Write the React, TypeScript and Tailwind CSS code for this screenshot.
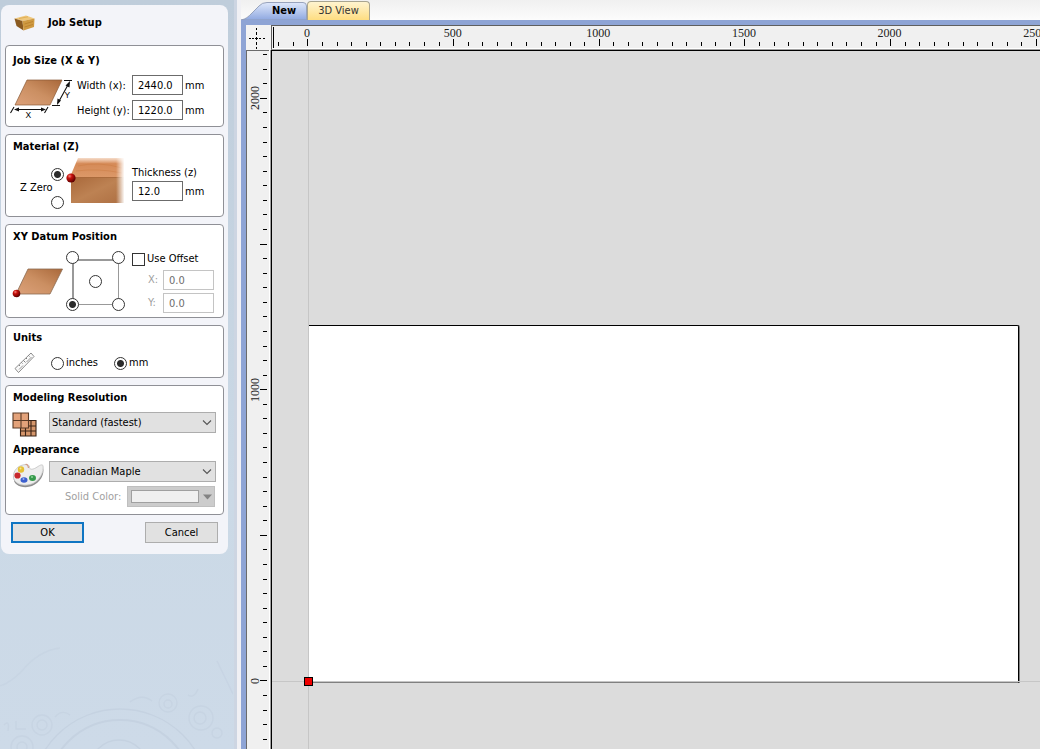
import React, { useId, useState } from "react";

const PX_PER_MM = 0.2913;

const radioClass =
  "m-0 block size-[13px] shrink-0 appearance-none rounded-full border border-[#333] bg-white checked:bg-[radial-gradient(circle,#2b2b2b_0,#2b2b2b_3px,#fff_4px)]";
const inputClass =
  "block h-5 w-[51px] border border-[#6b6b6b] bg-white px-[5px] text-black outline-none";
const disabledInputClass =
  "block h-5 w-[51px] border border-[#c4c4c4] bg-white px-[5px] text-[#6d6d6d] outline-none";

function Group({ title, roomy, children }: { title: string; roomy?: boolean; children: React.ReactNode }) {
  return (
    <section className={`rounded-[4px] border border-[#8f9096] bg-white px-1 ${roomy ? "pt-[7px]" : "pt-1"}`}>
      <h2 className="pl-[3px] font-bold leading-4">{title}</h2>
      {children}
    </section>
  );
}

function WoodBlockIcon() {
  return (
    <svg width="22" height="18" viewBox="0 0 22 18" aria-hidden="true">
      <path d="M0.5 4.5 L12 1.500 L20.500 4.500 L8.500 7 Z" fill="#efc77c" />
      <path d="M0.500 4.500 L8.500 7 L9.500 16.500 L2.500 12 Z" fill="#8a5a20" />
      <path d="M8.500 7 L20.500 4.500 L20 13 L9.500 16.500 Z" fill="#cf9a42" />
      <path d="M10.500 10 L19 7.500 M10.500 13 L19 10.500" stroke="#b87d2a" strokeWidth="0.8" />
      <path d="M5 4.500 L14 2.800" stroke="#dba951" strokeWidth="0.8" />
    </svg>
  );
}

function JobSizeDrawing() {
  return (
    <svg className="shrink-0" width="67" height="44" viewBox="0 0 67 44" aria-hidden="true">
      <defs>
        <linearGradient id="sheetWood" x1="0" y1="1" x2="1" y2="0">
          <stop offset="0" stopColor="#dca17a" />
          <stop offset="0.5" stopColor="#cb8f62" />
          <stop offset="1" stopColor="#a9683a" />
        </linearGradient>
      </defs>
      <path d="M17 5 H52 L40 30 H5 Z" fill="url(#sheetWood)" stroke="#8a5a36" strokeWidth="0.7" />
      <g stroke="#111" strokeWidth="1.100" fill="none">
        <path d="M54 5.500 H62 M42 30.500 H50 M59 8 L48 28" />
        <path d="M4 32 L0.500 38 M38 32 L34.500 38 M5 34.500 H34" />
      </g>
      <path d="M60 6 L55.500 10.500 L59.500 12.500 Z M47 30 L47.500 23.500 L51 25.500 Z" fill="#111" />
      <path d="M4 34.500 L9 32.500 V36.500 Z M36 34.500 L31 32.500 V36.500 Z" fill="#111" />
      <text x="15.500" y="43" fontSize="8.500" fontFamily="Liberation Sans, sans-serif">X</text>
      <text x="54.500" y="23" fontSize="8.500" fontFamily="Liberation Sans, sans-serif">Y</text>
    </svg>
  );
}

function MaterialDrawing() {
  return (
    <svg className="shrink-0" width="66" height="50" viewBox="0 0 66 50" aria-hidden="true">
      <defs>
        <linearGradient id="matTop" x1="0" y1="0" x2="0" y2="1">
          <stop offset="0" stopColor="#e6a678" stopOpacity="0.400" />
          <stop offset="0.300" stopColor="#d58a57" />
          <stop offset="1" stopColor="#dc9868" />
        </linearGradient>
        <linearGradient id="matFront" x1="0" y1="0" x2="1" y2="1">
          <stop offset="0" stopColor="#a9683a" />
          <stop offset="0.500" stopColor="#bd8253" />
          <stop offset="1" stopColor="#ad6f42" />
        </linearGradient>
        <linearGradient id="matFade" x1="0" y1="0" x2="1" y2="0">
          <stop offset="0" stopColor="#fff" stopOpacity="0" />
          <stop offset="1" stopColor="#fff" />
        </linearGradient>
        <radialGradient id="ball" cx="0.350" cy="0.300" r="0.700">
          <stop offset="0" stopColor="#f2877f" />
          <stop offset="0.350" stopColor="#c8100c" />
          <stop offset="1" stopColor="#5c0000" />
        </radialGradient>
      </defs>
      <path d="M14 2 H60 V21 H6 Z" fill="url(#matTop)" />
      <path d="M14 10 Q34 5 58 12 M12 15 Q34 12 58 17" stroke="#c9783f" strokeWidth="1" fill="none" opacity="0.400" />
      <path d="M7 21 H60 V47 H7 Z" fill="url(#matFront)" />
      <path d="M6 21.500 H58" stroke="#a8683a" strokeWidth="0.800" />
      <rect x="52" y="0" width="8.500" height="50" fill="url(#matFade)" />
      <circle cx="7" cy="22" r="4.600" fill="url(#ball)" />
    </svg>
  );
}

function DatumDrawing() {
  return (
    <svg className="shrink-0" width="56" height="32" viewBox="0 0 56 32" aria-hidden="true">
      <path d="M18 2 H52.500 L40 27 H6 Z" fill="url(#sheetWood)" stroke="#8a6a50" strokeWidth="0.800" />
      <circle cx="6.500" cy="26.500" r="3.800" fill="url(#ball)" />
    </svg>
  );
}

function MeasureIcon() {
  return (
    <svg width="22" height="22" viewBox="0 0 22 22" fill="none" stroke="#6e6e6e" aria-hidden="true">
      <path d="M1 16.500 L17 1 L20 4.500 L4.500 20.500 Z" fill="#fafafa" strokeWidth="0.800" />
      <path d="M5 13 L6 14 M7.500 10.500 L8.500 11.500 M9.500 8.500 L11.500 10.500 M12 6 L13 7 M14.500 3.500 L15.500 4.500" strokeWidth="0.900" />
      <path d="M5 17.500 L9 13.500 M12.500 10 L17.500 5" strokeWidth="0.700" />
    </svg>
  );
}

function ResolutionIcon() {
  return (
    <svg width="26" height="26" viewBox="0 0 26 26" aria-hidden="true">
      <path d="M8.500 8.500 H24 V24 H8.500 Z" fill="#d5966b" stroke="#3a2417" strokeWidth="1.100" />
      <path d="M13.500 8 V24 M19 8 V24 M8 14 H24 M8 19 H24" stroke="#3a2417" strokeWidth="1.100" />
      <path d="M1 1 H16.500 V16 H1 Z" fill="#e3a27a" stroke="#5a3a26" strokeWidth="1.100" />
      <path d="M9 1 V16 M1 8.500 H16.500" stroke="#5a3a26" strokeWidth="1.100" />
    </svg>
  );
}

function PaletteIcon() {
  return (
    <svg width="33" height="28" viewBox="0 0 33 28" aria-hidden="true">
      <path d="M2 14 C0 23 12 26 20 23 C28 20 33 11 31 5 L31 8 C29 15 22 21 13 21 Z" fill="#8d8d8d" />
      <path d="M14.500 1.500 C6 1.500 0.500 8 1.500 15 C3 22 13 24 21 20.500 C28 17 32 9 31 2.500 C29 0.500 26 4 22.500 5.500 C19 7 17.500 6 17.500 4 C17.500 2.500 16 1.500 14.500 1.500 Z" fill="#ededed" stroke="#c0c0c0" strokeWidth="0.800" />
      <path d="M13.500 1.500 Q16 1 16.500 5" stroke="#d39b86" strokeWidth="1.200" fill="none" />
      <circle cx="9" cy="6.500" r="3.200" fill="#e5c033" />
      <circle cx="5.500" cy="12.500" r="3.100" fill="#c8292d" />
      <ellipse cx="12" cy="17" rx="3.500" ry="2.800" fill="#3c5fce" />
      <ellipse cx="20.500" cy="15" rx="3.500" ry="2.900" fill="#369a4b" />
      <circle cx="8.500" cy="5.500" r="1" fill="#f8e694" />
      <circle cx="20" cy="14" r="1" fill="#8fd49a" />
      <circle cx="11.500" cy="16" r="1" fill="#9ab0f0" />
    </svg>
  );
}

function Watermark() {
  return (
    <svg className="mt-auto block" width="233" height="110" viewBox="0 0 233 110" fill="none" stroke="#c5d2e1" strokeWidth="1.300" aria-hidden="true">
      <path d="M0 47 Q10 44 22 32 Q38 12 60 9" opacity="0.600" />
      <path d="M217 22 L233 55" opacity="0.700" />
      <circle cx="120" cy="159" r="89" />
      <circle cx="120" cy="154" r="73" strokeWidth="2" />
      <circle cx="119" cy="130" r="29" />
      <g opacity="0.700">
        <circle cx="42" cy="86" r="10" />
        <circle cx="42" cy="86" r="5" />
        <circle cx="22" cy="108" r="11" />
        <circle cx="22" cy="108" r="5" />
        <circle cx="168" cy="64" r="9" />
        <circle cx="168" cy="65" r="4" />
        <circle cx="201" cy="79" r="12" />
        <circle cx="200" cy="79" r="6" />
        <circle cx="217" cy="94" r="5" />
        <path d="M4 86 Q10 80 8 92 M16 82 V90 H26 M55 78 Q62 70 70 76 M130 63 Q142 54 152 62 M188 56 Q194 60 198 50" />
      </g>
    </svg>
  );
}

function Combo({ label, value, options, indent }: { label: string; value: string; options: string[]; indent?: boolean }) {
  const [current, setCurrent] = useState(value);
  return (
    <div className="relative w-[167px]">
      <select
        aria-label={label}
        value={current}
        onChange={(e) => setCurrent(e.target.value)}
        className={`block h-[21px] w-full appearance-none border border-[#adadad] bg-[#e1e1e1] pr-5 text-black outline-none ${indent ? "pl-[11px]" : "pl-0.5"}`}
      >
        {options.map((o) => (
          <option key={o}>{o}</option>
        ))}
      </select>
      <svg className="pointer-events-none absolute right-1 top-[7px]" width="10" height="8" viewBox="0 0 10 8" fill="none" stroke="#555" aria-hidden="true">
        <path d="M1 1.500 L5 5.500 L9 1.500" strokeWidth="1.100" />
      </svg>
    </div>
  );
}

function SizeRow({ label, value }: { label: string; value: string }) {
  const id = useId();
  return (
    <div className="flex h-5 items-center">
      <label htmlFor={id} className="w-[55px] pt-0.5">{label}</label>
      <input id={id} className={inputClass} defaultValue={value} />
      <span className="pl-0.5 pt-0.5">mm</span>
    </div>
  );
}

function JobSetupPanel() {
  return (
    <form className="ml-px mt-[5px] w-[227px] rounded-lg bg-[#f3f4f9] px-1 pb-[11px]" onSubmit={(e) => e.preventDefault()}>
      <header className="flex h-10 items-center gap-3 pb-1 pl-[9px]">
        <WoodBlockIcon />
        <h1 className="font-bold">Job Setup</h1>
      </header>

      <div className="flex flex-col gap-[7px]">
        <Group title="Job Size (X & Y)" roomy>
          <div className="flex pb-[6px] pt-[6px]">
            <JobSizeDrawing />
            <div className="flex flex-col gap-[5px]">
              <SizeRow label="Width (x):" value="2440.0" />
              <SizeRow label="Height (y):" value="1220.0" />
            </div>
          </div>
        </Group>

        <Group title="Material (Z)">
          <fieldset className="flex items-start pb-[7px] pt-px">
            <span className="w-[41px] whitespace-nowrap pl-[10px] pt-6">Z Zero</span>
            <span className="flex w-[13px] flex-col gap-[15px] pt-3">
              <input type="radio" name="zzero" aria-label="Z zero at material surface" defaultChecked className={radioClass} />
              <input type="radio" name="zzero" aria-label="Z zero at machine bed" className={radioClass} />
            </span>
            <MaterialDrawing />
            <div className="flex flex-col pl-0.5 pt-[9px]">
              <label htmlFor="thickness" className="h-4">Thickness (z)</label>
              <span className="flex h-5 items-center">
                <input id="thickness" className={inputClass} defaultValue="12.0" />
                <span className="pl-0.5 pt-0.5">mm</span>
              </span>
            </div>
          </fieldset>
        </Group>

        <Group title="XY Datum Position">
          <div className="flex items-start pb-1 pt-[6px]">
            <div className="pt-4">
              <DatumDrawing />
            </div>
            <fieldset className="relative grid h-[60px] w-[59px] grid-cols-3 grid-rows-3 place-content-between">
              <span className="absolute inset-x-[6px] bottom-[6px] top-2 border-2 border-b border-r border-[#999]" />
              <input type="radio" name="datum" aria-label="Top left" className={`${radioClass} relative`} />
              <input type="radio" name="datum" aria-label="Top right" className={`${radioClass} relative col-start-3 justify-self-end`} />
              <input type="radio" name="datum" aria-label="Centre" className={`${radioClass} relative col-start-2 place-self-center`} />
              <input type="radio" name="datum" aria-label="Bottom left" defaultChecked className={`${radioClass} relative col-start-1 row-start-3 self-end`} />
              <input type="radio" name="datum" aria-label="Bottom right" className={`${radioClass} relative col-start-3 row-start-3 place-self-end`} />
            </fieldset>
            <div className="flex flex-col gap-[3px] pl-[7px]">
              <label className="flex h-4 items-center gap-0.5">
                <input type="checkbox" className="m-0 size-[13px] appearance-none border border-[#333] bg-white checked:bg-[#333]" />
                Use Offset
              </label>
              <label className="flex items-center text-[#a0a0a0]">
                <span className="w-[31px] pl-4">X:</span>
                <input disabled className={disabledInputClass} defaultValue="0.0" />
              </label>
              <label className="flex items-center text-[#a0a0a0]">
                <span className="w-[31px] pl-4">Y:</span>
                <input disabled className={disabledInputClass} defaultValue="0.0" />
              </label>
            </div>
          </div>
        </Group>

        <Group title="Units">
          <fieldset className="flex items-center pb-[3px] pl-1 pt-[6px]">
            <span className="w-[37px]">
              <MeasureIcon />
            </span>
            <label className="flex w-[63px] items-center gap-0.5">
              <input type="radio" name="units" className={radioClass} />
              inches
            </label>
            <label className="flex items-center gap-0.5">
              <input type="radio" name="units" defaultChecked className={radioClass} />
              mm
            </label>
          </fieldset>
        </Group>

        <Group title="Modeling Resolution">
          <div className="flex h-9 items-start pl-0.5 pt-[6px]">
            <span className="w-[37px]">
              <ResolutionIcon />
            </span>
            <Combo label="Modeling Resolution" value="Standard (fastest)" options={["Standard (fastest)", "High", "Very High"]} />
          </div>
          <h2 className="pl-[3px] font-bold leading-4">Appearance</h2>
          <div className="flex items-start pb-[7px] pl-0.5 pt-[3px]">
            <span className="w-[37px] pt-0.5">
              <PaletteIcon />
            </span>
            <div className="flex flex-col gap-1">
              <Combo label="Appearance" value="Canadian Maple" options={["Canadian Maple", "Oak", "Solid Color"]} indent />
              <div className="flex items-center">
                <span className="w-[78px] pl-4 text-[#a0a0a0]">Solid Color:</span>
                <button type="button" disabled aria-label="Solid Color" className="flex h-[21px] w-[88px] items-center gap-1 border border-[#bfbfbf] bg-[#cccccc] pl-[3px]">
                  <span className="h-[13px] w-[68px] border border-[#a0a0a0] bg-[#f0f0f0]" />
                  <svg width="9" height="6" viewBox="0 0 9 6" aria-hidden="true">
                    <path d="M0 0.500 H9 L4.500 5.500 Z" fill="#838383" />
                  </svg>
                </button>
              </div>
            </div>
          </div>
        </Group>
      </div>

      <footer className="flex justify-between px-[6px] pt-[7px]">
        <button type="submit" className="h-[21px] w-[73px] border-2 border-[#0f75c3] bg-[#e1e1e1] leading-[17px]">OK</button>
        <button type="button" className="h-[21px] w-[73px] border border-[#adadad] bg-[#e1e1e1]">Cancel</button>
      </footer>
    </form>
  );
}

function range(from: number, to: number, step = 50) {
  const out: number[] = [];
  for (let v = from; v <= to; v += step) out.push(v);
  return out;
}

function HorizontalRuler() {
  return (
    <div className="h-[25px] min-w-0 flex-1 overflow-hidden border-b border-l border-t border-[#5f5f5f] border-b-[#a0a0a0] bg-[#f0f0f0]">
      <svg className="block" width="4000" height="23" shapeRendering="crispEdges" role="img" aria-label="Horizontal ruler">
        <rect x="0" y="22" width="4000" height="1" fill="#fff" />
        <rect x="1" y="1" width="1" height="21" fill="#000" />
        {range(-100, 12000).map((v) => {
          const x = Math.ceil(35 + v * PX_PER_MM);
          const major = v % 500 === 0;
          return <rect key={v} x={x} y={major ? 13 : 16} width="1" height={major ? 7 : 4} fill="#000" />;
        })}
        {range(0, 2500, 500).map((v) => (
          <text key={v} x={35 + v * PX_PER_MM} y="11" textAnchor="middle" fontSize="12" fontFamily="Liberation Serif, serif" fill="#222">
            {v}
          </text>
        ))}
      </svg>
    </div>
  );
}

function VerticalRuler() {
  return (
    <div className="w-[23px] shrink-0 overflow-hidden border-l border-t border-[#6b6b6b] bg-[#f0f0f0]">
      <svg className="block" width="22" height="698" shapeRendering="crispEdges" role="img" aria-label="Vertical ruler">
        {range(-200, 2150).map((v) => {
          const y = Math.ceil(629 - v * PX_PER_MM);
          const major = v % 500 === 0;
          return <rect key={v} x={major ? 13 : 16} y={y} width={major ? 7 : 4} height="1" fill="#000" />;
        })}
        {range(0, 2000, 1000).map((v) => (
          <text
            key={v}
            transform={`translate(12 ${Math.round(630 - v * PX_PER_MM)}) rotate(-90)`}
            textAnchor="middle"
            fontSize="12"
            fontFamily="Liberation Serif, serif"
            fill="#222"
          >
            {v}
          </text>
        ))}
      </svg>
    </div>
  );
}

function Canvas() {
  return (
    <div className="relative min-w-0 flex-1 overflow-hidden border-l border-t border-black bg-[#dcdcdc]">
      <div className="absolute left-[37px] top-[274px] h-[358px] w-[710px] rounded-tr-[2px] border-b border-r border-t border-black border-b-[#808080] bg-white shadow-[1px_0_0_#808080]" />
      <div className="absolute inset-y-0 left-[36px] w-px bg-[#c6c6c6]" />
      <div className="absolute inset-x-0 top-[630px] h-px bg-[#c6c6c6]" />
      <div className="absolute left-[32px] top-[626px] size-[9px] border border-black bg-[#f00000]" />
    </div>
  );
}

function Workspace() {
  return (
    <main className="flex min-w-0 flex-1 flex-col">
      <div role="tablist" className="flex h-5 items-end bg-gradient-to-b from-[#f0f0f0] to-[#fcfcfc]">
        <button role="tab" aria-selected="true" className="relative h-[18px] w-[66px] font-bold">
          <svg className="absolute inset-0" width="66" height="18" viewBox="0 0 66 18" aria-hidden="true">
            <defs>
              <linearGradient id="tabBlue" x1="0" y1="0" x2="0" y2="1">
                <stop offset="0" stopColor="#dfe8fb" />
                <stop offset="1" stopColor="#8fa8e0" />
              </linearGradient>
            </defs>
            <path d="M0 18 C5 17 7 15 11 11 L18 4 Q21 0.500 26 0.500 H62 Q65.500 0.500 65.500 4 V18 Z" fill="url(#tabBlue)" stroke="#8f9bb5" strokeWidth="0.900" />
          </svg>
          <span className="relative block pl-5 leading-[18px]">New</span>
        </button>
        <button role="tab" aria-selected="false" className="h-[19px] w-[63px] rounded-t-[4px] border border-b-0 border-[#a9a590] bg-gradient-to-b from-[#fff4cf] to-[#fedd80] leading-[18px] text-[#333]">
          3D View
        </button>
      </div>
      <div className="flex min-h-0 flex-1 flex-col border-l-[5px] border-t-[5px] border-[#8ea4d5]">
        <div className="flex">
          <div className="flex w-[25px] shrink-0 items-center bg-[#f3f3f3] pl-0.5 pt-0.5">
            <svg width="17" height="21" viewBox="0 0 17 21" shapeRendering="crispEdges" stroke="#000" aria-hidden="true">
              <path d="M8.500 0 V2 M8.500 4 V7 M8.500 9 V12 M8.500 14 V17 M8.500 19 V21" />
              <path d="M1 10.500 H3 M4 10.500 H6 M7 10.500 H10 M11 10.500 H13 M15 10.500 H17" />
            </svg>
          </div>
          <HorizontalRuler />
        </div>
        <div className="flex min-h-0 flex-1">
          <VerticalRuler />
          <div className="w-0.5 shrink-0 border-r border-[#a0a0a0] bg-white" />
          <Canvas />
        </div>
      </div>
    </main>
  );
}

export default function App() {
  return (
    <div className="flex h-screen overflow-hidden bg-[#f0f0f4] font-['DejaVu_Sans_Condensed','DejaVu_Sans',sans-serif] text-[11px] leading-4 text-black">
      <aside className="mr-1 flex w-[237px] shrink-0 flex-col border-r-[3px] border-[#cdd5e2] bg-gradient-to-b from-[#bfcddb] from-0% via-[#cbd9e6] via-65% to-[#cddae8]">
        <JobSetupPanel />
        <Watermark />
      </aside>
      <Workspace />
    </div>
  );
}
